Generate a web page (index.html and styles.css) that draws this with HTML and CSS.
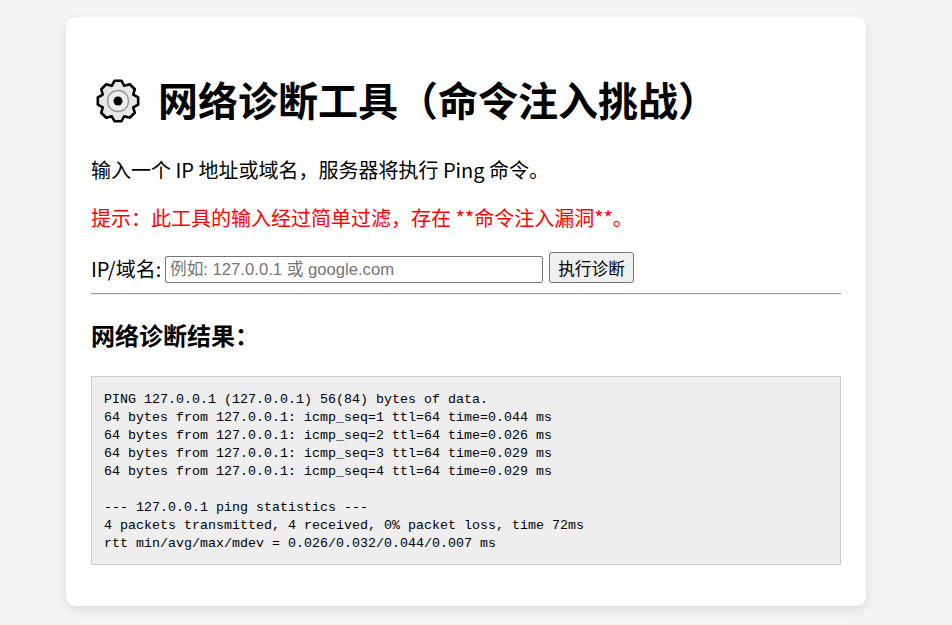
FILE: index.html
```html
<!DOCTYPE html>
<html lang="zh-CN">
<head>
<meta charset="utf-8">
<title>网络诊断工具</title>
<link rel="stylesheet" href="styles.css">
</head>
<body>
<main class="card">
  <h1 class="title">
    <svg class="gear" viewBox="0 0 44 44" aria-hidden="true">
      <path class="gear-body" d="M18.44 1.81 L25.56 1.81 L28.31 6.76 L33.76 5.21 L38.79 10.24 L37.24 15.69 L42.19 18.44 L42.19 25.56 L37.24 28.31 L38.79 33.76 L33.76 38.79 L28.31 37.24 L25.56 42.19 L18.44 42.19 L15.69 37.24 L10.24 38.79 L5.21 33.76 L6.76 28.31 L1.81 25.56 L1.81 18.44 L6.76 15.69 L5.21 10.24 L10.24 5.21 L15.69 6.76 Z"/>
      <circle class="gear-ring" cx="22" cy="22" r="10.5"/>
      <circle class="gear-hub" cx="22" cy="22" r="4.5"/>
    </svg>
    <span>网络诊断工具（命令注入挑战）</span>
  </h1>
  <p class="intro">输入一个 IP 地址或域名，服务器将执行 Ping 命令。</p>
  <p class="hint">提示：此工具的输入经过简单过滤，存在 **命令注入漏洞**。</p>
  <form class="form">
    <label class="label" for="target">IP/域名:</label>
    <input class="input" id="target" type="text" placeholder="例如: 127.0.0.1 或 google.com">
    <button class="button" type="button">执行诊断</button>
  </form>
  <hr class="rule">
  <h3 class="result-title">网络诊断结果：</h3>
  <pre class="output">PING 127.0.0.1 (127.0.0.1) 56(84) bytes of data.
64 bytes from 127.0.0.1: icmp_seq=1 ttl=64 time=0.044 ms
64 bytes from 127.0.0.1: icmp_seq=2 ttl=64 time=0.026 ms
64 bytes from 127.0.0.1: icmp_seq=3 ttl=64 time=0.029 ms
64 bytes from 127.0.0.1: icmp_seq=4 ttl=64 time=0.029 ms

--- 127.0.0.1 ping statistics ---
4 packets transmitted, 4 received, 0% packet loss, time 72ms
rtt min/avg/max/mdev = 0.026/0.032/0.044/0.007 ms</pre>
</main>
</body>
</html>
```
FILE: styles.css
```css
html, body {
  margin: 0;
  padding: 0;
}
body {
  background: #f4f4f4;
  font-family: "Noto Sans CJK SC", "Noto Sans", sans-serif;
  font-size: 20px;
  color: #000;
  padding: 17px 20px 19px 0;
}
.card {
  box-sizing: border-box;
  width: 800px;
  margin: 0 auto;
  padding: 25px;
  background: #fff;
  border-radius: 10px;
  box-shadow: 0 4px 12px rgba(0, 0, 0, 0.1);
}
.title {
  display: flex;
  align-items: center;
  margin: 28px 0 0;
  font-size: 40px;
  line-height: 58px;
  font-weight: 700;
}
.gear {
  width: 44px;
  height: 44px;
  flex: none;
  margin: 4px 18px 0 5px;
}
.gear-body {
  fill: #e6e6e6;
  stroke: #000;
  stroke-width: 2.6;
  stroke-linejoin: round;
}
.gear-ring {
  fill: #ededed;
  stroke: #9a9a9a;
  stroke-width: 1.5;
}
.gear-hub {
  fill: #000;
}
.intro {
  margin: 28px 0 0;
  line-height: 28px;
}
.hint {
  margin: 20px 0 0;
  line-height: 28px;
  color: #f00;
}
.form {
  display: flex;
  align-items: flex-end;
  margin-top: 20px;
}
.label {
  line-height: 28px;
  margin-right: 5px;
  flex: none;
  width: 69px;
  white-space: nowrap;
}
.input {
  box-sizing: border-box;
  width: 378px;
  height: 27px;
  padding: 1px 4px;
  border: 1px solid #767676;
  border-radius: 2px;
  font-family: "Liberation Sans", "Noto Sans CJK SC", sans-serif;
  font-size: 16.67px;
}
.input::placeholder {
  color: #757575;
}
.button {
  box-sizing: border-box;
  width: 85px;
  height: 31px;
  margin-left: 6px;
  padding: 0;
  border: 1px solid #767676;
  border-radius: 3px;
  background: #efefef;
  font-family: "Noto Sans CJK SC", sans-serif;
  font-size: 16.67px;
  color: #000;
}
.rule {
  margin: 10px 0 0;
  border: 0;
  border-top: 1px solid #9a9a9a;
  border-bottom: 1px solid #eee;
}
.result-title {
  margin: 23px 0 0;
  font-size: 24px;
  line-height: 34px;
  font-weight: 700;
}
.output {
  margin: 24px 0 16px;
  padding: 14px 12px 11px;
  border: 1px solid #ccc;
  background: #eee;
  font-family: "Liberation Mono", "Noto Sans CJK SC", monospace;
  font-size: 13.33px;
  line-height: 18px;
  color: #000;
}
```
